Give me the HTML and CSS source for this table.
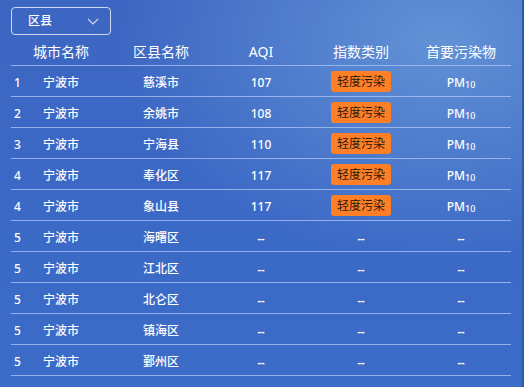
FILE: index.html
```html
<!DOCTYPE html>
<html lang="zh">
<head>
<meta charset="utf-8">
<title>AQI</title>
<link rel="stylesheet" href="styles.css">
</head>
<body>
<div class="panel">
  <div class="select">
    <span class="select-label">区县</span>
    <svg class="chevron" width="12" height="7" viewBox="0 0 12 7"><path d="M1 1 L6 6 L11 1" fill="none" stroke="rgba(255,255,255,0.75)" stroke-width="1.2"/></svg>
  </div>
  <div class="table">
    <div class="row head">
      <div class="cell first"><span class="idx"></span><span>城市名称</span><span></span></div>
      <div class="cell">区县名称</div>
      <div class="cell">AQI</div>
      <div class="cell">指数类别</div>
      <div class="cell">首要污染物</div>
    </div>
    <div class="row">
      <div class="cell first"><span class="idx">1</span><span>宁波市</span><span></span></div>
      <div class="cell">慈溪市</div>
      <div class="cell">107</div>
      <div class="cell tag"><span class="badge">轻度污染</span></div>
      <div class="cell">PM<sub>10</sub></div>
    </div>
    <div class="row">
      <div class="cell first"><span class="idx">2</span><span>宁波市</span><span></span></div>
      <div class="cell">余姚市</div>
      <div class="cell">108</div>
      <div class="cell tag"><span class="badge">轻度污染</span></div>
      <div class="cell">PM<sub>10</sub></div>
    </div>
    <div class="row">
      <div class="cell first"><span class="idx">3</span><span>宁波市</span><span></span></div>
      <div class="cell">宁海县</div>
      <div class="cell">110</div>
      <div class="cell tag"><span class="badge">轻度污染</span></div>
      <div class="cell">PM<sub>10</sub></div>
    </div>
    <div class="row">
      <div class="cell first"><span class="idx">4</span><span>宁波市</span><span></span></div>
      <div class="cell">奉化区</div>
      <div class="cell">117</div>
      <div class="cell tag"><span class="badge">轻度污染</span></div>
      <div class="cell">PM<sub>10</sub></div>
    </div>
    <div class="row">
      <div class="cell first"><span class="idx">4</span><span>宁波市</span><span></span></div>
      <div class="cell">象山县</div>
      <div class="cell">117</div>
      <div class="cell tag"><span class="badge">轻度污染</span></div>
      <div class="cell">PM<sub>10</sub></div>
    </div>
    <div class="row">
      <div class="cell first"><span class="idx">5</span><span>宁波市</span><span></span></div>
      <div class="cell">海曙区</div>
      <div class="cell dash">--</div>
      <div class="cell dash">--</div>
      <div class="cell dash">--</div>
    </div>
    <div class="row">
      <div class="cell first"><span class="idx">5</span><span>宁波市</span><span></span></div>
      <div class="cell">江北区</div>
      <div class="cell dash">--</div>
      <div class="cell dash">--</div>
      <div class="cell dash">--</div>
    </div>
    <div class="row">
      <div class="cell first"><span class="idx">5</span><span>宁波市</span><span></span></div>
      <div class="cell">北仑区</div>
      <div class="cell dash">--</div>
      <div class="cell dash">--</div>
      <div class="cell dash">--</div>
    </div>
    <div class="row">
      <div class="cell first"><span class="idx">5</span><span>宁波市</span><span></span></div>
      <div class="cell">镇海区</div>
      <div class="cell dash">--</div>
      <div class="cell dash">--</div>
      <div class="cell dash">--</div>
    </div>
    <div class="row">
      <div class="cell first"><span class="idx">5</span><span>宁波市</span><span></span></div>
      <div class="cell">鄞州区</div>
      <div class="cell dash">--</div>
      <div class="cell dash">--</div>
      <div class="cell dash">--</div>
    </div>
  </div>
</div>
</body>
</html>
```
FILE: styles.css
```css
html, body {
  margin: 0;
  padding: 0;
}
body {
  width: 524px;
  height: 387px;
  overflow: hidden;
  font-family: "Noto Sans", "Noto Sans CJK SC", sans-serif;
  color: #ffffff;
}
.panel {
  box-sizing: border-box;
  width: 524px;
  height: 387px;
  border-right: 2px solid #2f5ba6;
  padding: 7px 0 0 11px;
  background:
    radial-gradient(ellipse 320px 220px at 440px 40px, rgba(110, 160, 220, 0.75), rgba(110, 160, 220, 0) 100%),
    linear-gradient(180deg, #3d66c2 0%, #3b69c6 60%, #3b6cc8 100%);
}
.select {
  box-sizing: border-box;
  width: 100px;
  height: 28px;
  border: 1px solid rgba(255, 255, 255, 0.75);
  border-radius: 4px;
  display: flex;
  align-items: center;
  justify-content: space-between;
  padding: 0 11px 0 16px;
}
.select-label {
  font-size: 12px;
  font-weight: 500;
  line-height: 1;
}
.chevron {
  display: block;
  margin-top: 1px;
}
.table {
  width: 500px;
}
.row {
  display: grid;
  grid-template-columns: repeat(5, 100px);
  height: 30px;
  border-bottom: 1px solid rgba(175, 200, 245, 0.75);
  align-items: center;
  font-size: 12px;
  font-weight: 500;
}
.row.head {
  font-size: 14px;
  font-weight: 400;
}
.cell {
  text-align: center;
  line-height: 1;
  white-space: nowrap;
  padding-top: 3px;
}
.cell.tag {
  padding-top: 0;
}
.cell.first {
  display: grid;
  grid-template-columns: 1fr auto 1fr;
  align-items: center;
}
.idx {
  text-align: left;
  padding-left: 3px;
}
.badge {
  display: inline-block;
  width: 60px;
  height: 21px;
  line-height: 21px;
  background: #ff7f26;
  color: #2a1a10;
  border-radius: 3px;
  font-weight: 400;
}
sub {
  font-size: 9px;
  vertical-align: -1px;
}
.dash {
  font-size: 11px;
  font-weight: 700;
}
```
